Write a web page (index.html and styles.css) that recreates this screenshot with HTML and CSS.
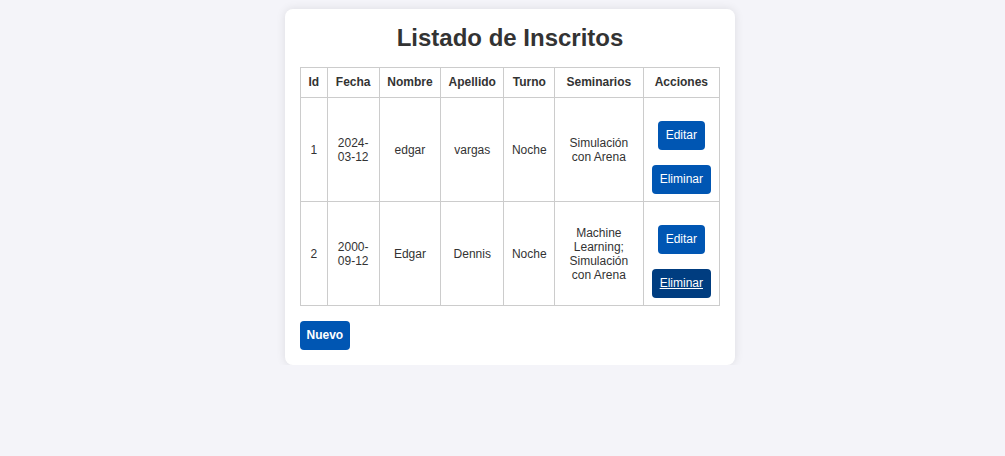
FILE: index.html
```html
<!DOCTYPE html>
<html lang="es">
<head>
<meta charset="utf-8">
<title>Listado de Inscritos</title>
<link rel="stylesheet" href="styles.css">
</head>
<body>
<div class="card">
  <h1 class="title">Listado de Inscritos</h1>
  <table class="grid">
    <thead>
      <tr>
        <th>Id</th><th>Fecha</th><th>Nombre</th><th>Apellido</th><th>Turno</th><th>Seminarios</th><th>Acciones</th>
      </tr>
    </thead>
    <tbody>
      <tr>
        <td>1</td><td>2024-03-12</td><td>edgar</td><td>vargas</td><td>Noche</td><td>Simulación con Arena</td>
        <td class="actions"><div class="action-stack"><a class="btn" href="#">Editar</a><a class="btn" href="#">Eliminar</a></div></td>
      </tr>
      <tr>
        <td>2</td><td>2000-09-12</td><td>Edgar</td><td>Dennis</td><td>Noche</td><td>Machine Learning; Simulación con Arena</td>
        <td class="actions"><div class="action-stack"><a class="btn" href="#">Editar</a><a class="btn btn-hover" href="#">Eliminar</a></div></td>
      </tr>
    </tbody>
  </table>
  <div class="footer"><a class="btn btn-bold" href="#">Nuevo</a></div>
</div>
</body>
</html>
```
FILE: styles.css
```css
html, body {
  margin: 0;
  background: #f4f4f9;
}
body {
  padding: 9px 0 0 15px;
  font-family: "Liberation Sans", Arial, sans-serif;
  color: #333;
}
.card {
  width: 420px;
  margin: 0 auto;
  background: #fff;
  padding: 15px;
  border-radius: 8px;
  box-shadow: 0 0 10px rgba(0, 0, 0, 0.1);
}
.title {
  margin: 0 0 15px;
  font-size: 24px;
  font-weight: bold;
  text-align: center;
  color: #333;
}
.grid {
  width: 100%;
  border-collapse: collapse;
  font-size: 12px;
}
.grid th, .grid td {
  border: 1px solid #ccc;
  padding: 8px 7.5px;
  text-align: center;
  vertical-align: middle;
}
.grid th {
  font-weight: bold;
  background: #fff;
  padding-top: 7px;
}
.grid td.actions {
  padding: 23px 8px 7px;
}
.action-stack {
  display: flex;
  flex-direction: column;
  align-items: center;
  gap: 15px;
}
.btn {
  display: inline-block;
  background: #0056b3;
  color: #fff;
  text-decoration: none;
  font-size: 12px;
  line-height: 13px;
  padding: 8px;
  border-radius: 4px;
}
.btn-hover {
  background: #003d80;
  text-decoration: underline;
}
.btn-bold {
  font-weight: bold;
  padding: 8px 6.5px;
}
.footer {
  margin-top: 15px;
  line-height: 0;
}
```
